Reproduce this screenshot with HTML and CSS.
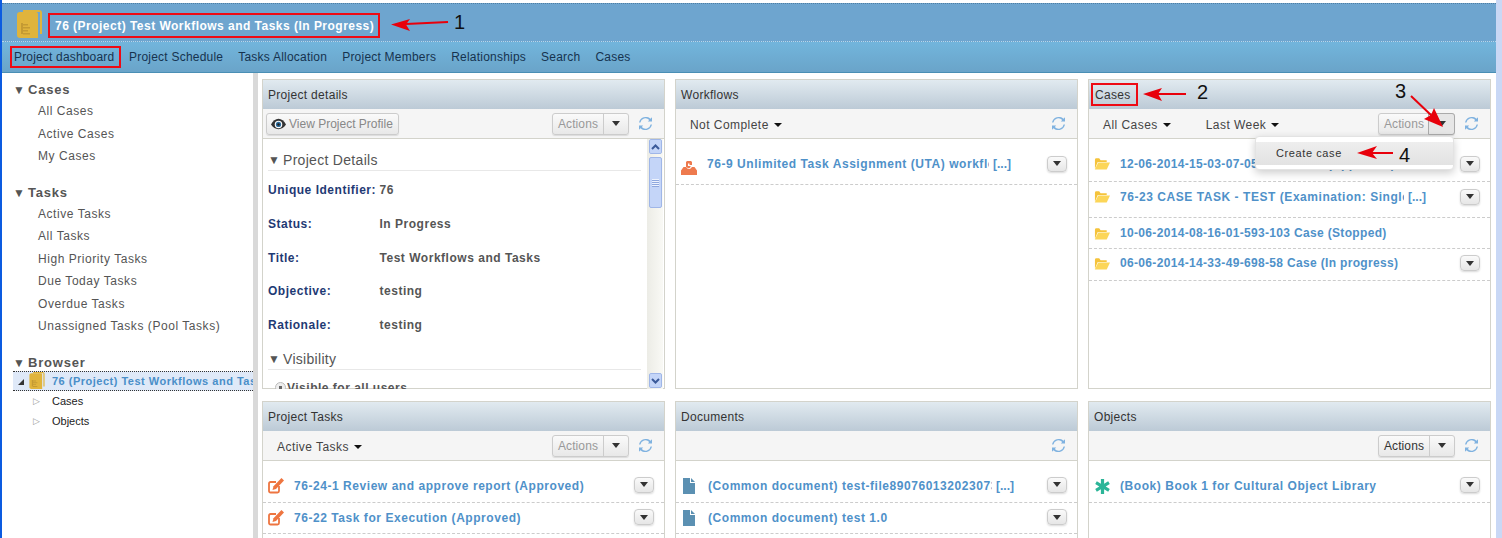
FILE: index.html
```html
<!DOCTYPE html>
<html>
<head lang="en">
    <meta charset="UTF-8">
    <title>76 (Project) Test Workflows and Tasks</title>
    <link rel="stylesheet" href="styles.css">
</head>
<body>
<svg class="defs" width="0" height="0">
    <symbol id="i-project" viewBox="0 0 25 28">
        <path d="M6 0h16a3 3 0 0 1 3 3v21h-2V2H6z" fill="#e0b43c"/>
        <path d="M3 2h16a2 2 0 0 1 2 2v24H3a3 3 0 0 1-3-3V5a3 3 0 0 1 3-3z" fill="#e0b43c"/>
        <path d="M4 13h2v11H4zM6 14h5v1.500H6zM6 17h7v1.500H6zM6 20h5v1.500H6zM6 23h7v1.500H6z" fill="#c49a33"/>
    </symbol>
    <symbol id="i-refresh" viewBox="0 0 14 14">
        <path d="M1.500 6A5.500 5.500 0 0 1 11 3.200L9.500 4.800H14V.3l-1.600 1.600A7.500 7.500 0 0 0 0 6z" fill="#7fb2e0"/>
        <path d="M12.500 8A5.500 5.500 0 0 1 3 10.800l1.500-1.600H0v4.500l1.600-1.600A7.500 7.500 0 0 0 14 8z" fill="#7fb2e0"/>
    </symbol>
    <symbol id="i-folder" viewBox="0 0 17 13">
        <path d="M1 2.500A1.500 1.500 0 0 1 2.500 1h3L7 3h6.500v2H4L1 12z" fill="#f5c33b"/>
        <path d="M4.500 5.500H17L13.500 13H.8z" fill="#fcd658"/>
    </symbol>
    <symbol id="i-edit" viewBox="0 0 16 16">
        <path d="M11 8v5a1.500 1.500 0 0 1-1.500 1.500H2.500A1.500 1.500 0 0 1 1 13V5.500A1.500 1.500 0 0 1 2.500 4H8" fill="none" stroke="#ee7540" stroke-width="1.800"/>
        <path d="M13.500 0l2.500 2.500L8 11 4.500 12 5.500 8.300z" fill="#ee7540"/>
    </symbol>
    <symbol id="i-doc" viewBox="0 0 12 16">
        <path d="M0 0h7v5h5v11H0zM8 0l4 4H8z" fill="#5b90b2"/>
    </symbol>
    <symbol id="i-flow" viewBox="0 0 16 14">
        <path d="M2.500 6H5l2 2h2l2-2h2.500L16 9.500V14H0V9.500z" fill="#ee7a4e"/>
        <path d="M6 0h4l1 1v3H8.500V2.500H7V5h2.500v1L8 7.500 5 6V1z" fill="#ee7a4e"/>
    </symbol>
    <symbol id="i-star" viewBox="0 0 14 14">
        <path d="M5.500 0h3v4.400L12.300 2l1.500 2.700L10 7l3.800 2.300-1.500 2.700-3.800-2.400V14h-3V9.600L1.700 12 .2 9.300 4 7 .2 4.700 1.700 2l3.800 2.400z" fill="#2cb598"/>
    </symbol>
    <symbol id="i-eye" viewBox="0 0 16 12">
        <path d="M0 6.500C2 3 5 .5 8 .5s6 2.500 8 6c-2 3-5 5-8 5s-6-2-8-5z" fill="#333"/>
        <circle cx="8" cy="6.500" r="4" fill="#fff"/>
        <circle cx="8" cy="6.500" r="2.800" fill="#2f6f9f"/>
        <circle cx="8" cy="6.500" r="1.300" fill="#222"/>
    </symbol>
</svg>

<div class="page">
    <div class="head">
        <svg class="head-icon"><use href="#i-project"/></svg>
        <h1 class="head-title">76 (Project) Test Workflows and Tasks (In Progress)</h1>
    </div>
    <div class="nav">
        <a class="nav-item nav-current">Project dashboard</a>
        <a class="nav-item">Project Schedule</a>
        <a class="nav-item">Tasks Allocation</a>
        <a class="nav-item">Project Members</a>
        <a class="nav-item">Relationships</a>
        <a class="nav-item">Search</a>
        <a class="nav-item">Cases</a>
    </div>

    <div class="main">
        <div class="side">
            <div class="side-group">
                <h3 class="side-title"><span class="tri">▼</span>Cases</h3>
                <a class="side-link">All Cases</a>
                <a class="side-link">Active Cases</a>
                <a class="side-link">My Cases</a>
            </div>
            <div class="side-group">
                <h3 class="side-title"><span class="tri">▼</span>Tasks</h3>
                <a class="side-link">Active Tasks</a>
                <a class="side-link">All Tasks</a>
                <a class="side-link">High Priority Tasks</a>
                <a class="side-link">Due Today Tasks</a>
                <a class="side-link">Overdue Tasks</a>
                <a class="side-link">Unassigned Tasks (Pool Tasks)</a>
            </div>
            <div class="side-group">
                <h3 class="side-title side-title-tree"><span class="tri">▼</span>Browser</h3>
                <div class="tree-root">
                    <span class="tree-open"></span>
                    <svg class="tree-icon"><use href="#i-project"/></svg>
                    <span class="tree-root-text">76 (Project) Test Workflows and Tasks (In Progress)</span>
                </div>
                <div class="tree-item"><span class="tree-closed">▷</span>Cases</div>
                <div class="tree-item"><span class="tree-closed">▷</span>Objects</div>
            </div>
        </div>
        <div class="splitter"></div>

        <div class="panels">
            <section class="panel">
                <div class="panel-head">Project details</div>
                <div class="panel-bar">
                    <button class="btn-view"><svg class="eye"><use href="#i-eye"/></svg>View Project Profile</button>
                    <div class="bar-right">
                        <div class="actions actions-off"><span class="actions-label">Actions</span><span class="actions-caret"><i class="caret"></i></span></div>
                        <svg class="refresh"><use href="#i-refresh"/></svg>
                    </div>
                </div>
                <div class="details">
                    <div class="details-body">
                        <h4 class="sub-title"><span class="tri-sub">▼</span>Project Details</h4>
                        <div class="field field-first"><b>Unique Identifier:</b><span>76</span></div>
                        <div class="field"><b>Status:</b><span>In Progress</span></div>
                        <div class="field"><b>Title:</b><span>Test Workflows and Tasks</span></div>
                        <div class="field"><b>Objective:</b><span>testing</span></div>
                        <div class="field"><b>Rationale:</b><span>testing</span></div>
                        <h4 class="sub-title sub-title-2"><span class="tri-sub">▼</span>Visibility</h4>
                        <div class="radio-row"><i class="radio"></i><b>Visible for all users</b></div>
                    </div>
                    <div class="scroll">
                        <span class="scroll-btn"><svg width="9" height="6" viewBox="0 0 9 6"><path d="M1 5l3.500-3.500L8 5" fill="none" stroke="#3b5a9a" stroke-width="2"/></svg></span>
                        <span class="scroll-thumb"><i class="grip"></i></span>
                        <span class="scroll-track"></span>
                        <span class="scroll-btn"><svg width="9" height="6" viewBox="0 0 9 6"><path d="M1 1l3.500 3.500L8 1" fill="none" stroke="#3b5a9a" stroke-width="2"/></svg></span>
                    </div>
                </div>
            </section>

            <section class="panel">
                <div class="panel-head">Workflows</div>
                <div class="panel-bar">
                    <a class="filter">Not Complete<i class="filter-caret"></i></a>
                    <div class="bar-right">
                        <svg class="refresh"><use href="#i-refresh"/></svg>
                    </div>
                </div>
                <div class="rows rows-top">
                    <div class="row row-wf">
                        <svg class="row-icon row-flow"><use href="#i-flow"/></svg>
                        <a class="row-text row-cut row-cut-wf">76-9 Unlimited Task Assignment (UTA) workflow</a><span class="row-more">[...]</span>
                        <span class="row-menu"><i class="caret"></i></span>
                    </div>
                </div>
            </section>

            <section class="panel">
                <div class="panel-head"><span class="mark-cases">Cases</span></div>
                <div class="panel-bar">
                    <a class="filter">All Cases<i class="filter-caret"></i></a>
                    <a class="filter filter-2">Last Week<i class="filter-caret"></i></a>
                    <div class="bar-right">
                        <div class="actions actions-off actions-open"><span class="actions-label">Actions</span><span class="actions-caret"><i class="caret"></i></span></div>
                        <svg class="refresh"><use href="#i-refresh"/></svg>
                    </div>
                </div>
                <div class="rows rows-top">
                    <div class="row row-c1">
                        <svg class="row-icon row-folder"><use href="#i-folder"/></svg>
                        <a class="row-text row-text-date">12-06-2014-15-03-07-059-109 Case (Approved)</a>
                        <span class="row-menu"><i class="caret"></i></span>
                    </div>
                    <div class="row row-c2">
                        <svg class="row-icon row-folder"><use href="#i-folder"/></svg>
                        <a class="row-text row-cut row-cut-c">76-23 CASE TASK - TEST (Examination: Single</a><span class="row-more">[...]</span>
                        <span class="row-menu"><i class="caret"></i></span>
                    </div>
                    <div class="row row-c3">
                        <svg class="row-icon row-folder"><use href="#i-folder"/></svg>
                        <a class="row-text row-text-date">10-06-2014-08-16-01-593-103 Case (Stopped)</a>
                    </div>
                    <div class="row row-c4">
                        <svg class="row-icon row-folder"><use href="#i-folder"/></svg>
                        <a class="row-text row-text-date">06-06-2014-14-33-49-698-58 Case (In progress)</a>
                        <span class="row-menu"><i class="caret"></i></span>
                    </div>
                </div>
                <div class="menu"><div class="menu-item">Create case</div></div>
            </section>

            <section class="panel">
                <div class="panel-head">Project Tasks</div>
                <div class="panel-bar">
                    <a class="filter">Active Tasks<i class="filter-caret"></i></a>
                    <div class="bar-right">
                        <div class="actions actions-off"><span class="actions-label">Actions</span><span class="actions-caret"><i class="caret"></i></span></div>
                        <svg class="refresh"><use href="#i-refresh"/></svg>
                    </div>
                </div>
                <div class="rows rows-top">
                    <div class="row row-b1">
                        <svg class="row-icon row-edit"><use href="#i-edit"/></svg>
                        <a class="row-text">76-24-1 Review and approve report (Approved)</a>
                        <span class="row-menu"><i class="caret"></i></span>
                    </div>
                    <div class="row row-b2">
                        <svg class="row-icon row-edit"><use href="#i-edit"/></svg>
                        <a class="row-text">76-22 Task for Execution (Approved)</a>
                        <span class="row-menu"><i class="caret"></i></span>
                    </div>
                </div>
            </section>

            <section class="panel">
                <div class="panel-head">Documents</div>
                <div class="panel-bar">
                    <div class="bar-right">
                        <svg class="refresh"><use href="#i-refresh"/></svg>
                    </div>
                </div>
                <div class="rows rows-top">
                    <div class="row row-b1">
                        <svg class="row-icon row-doc"><use href="#i-doc"/></svg>
                        <a class="row-text row-cut row-cut-d">(Common document) test-file890760132023073</a><span class="row-more">[...]</span>
                        <span class="row-menu"><i class="caret"></i></span>
                    </div>
                    <div class="row row-b2">
                        <svg class="row-icon row-doc"><use href="#i-doc"/></svg>
                        <a class="row-text">(Common document) test 1.0</a>
                        <span class="row-menu"><i class="caret"></i></span>
                    </div>
                </div>
            </section>

            <section class="panel">
                <div class="panel-head">Objects</div>
                <div class="panel-bar">
                    <div class="bar-right">
                        <div class="actions"><span class="actions-label">Actions</span><span class="actions-caret"><i class="caret"></i></span></div>
                        <svg class="refresh"><use href="#i-refresh"/></svg>
                    </div>
                </div>
                <div class="rows rows-top">
                    <div class="row row-b1">
                        <svg class="row-icon row-star"><use href="#i-star"/></svg>
                        <a class="row-text">(Book) Book 1 for Cultural Object Library</a>
                        <span class="row-menu"><i class="caret"></i></span>
                    </div>
                </div>
            </section>
        </div>
    </div>

    <!-- annotations drawn on top of the screenshot -->
    <svg class="notes" width="1502" height="538" viewBox="0 0 1502 538">
        <g stroke="#e8000b" stroke-width="2" fill="#e8000b">
            <path d="M448 22 L406 24" fill="none"/>
            <path d="M391 24.500 L410 19 L406 24.500 L410 31z" stroke="none"/>
            <path d="M1186 94 L1158 94" fill="none"/>
            <path d="M1143 94 L1162 88 L1158 94 L1162 101z" stroke="none"/>
            <path d="M1411 96 L1432 116" fill="none"/>
            <path d="M1443 127 L1424 119 L1431 115 L1434 108z" stroke="none"/>
            <path d="M1393 153 L1368 153" fill="none"/>
            <path d="M1357 153 L1377 146 L1372 153 L1377 159z" stroke="none"/>
        </g>
    </svg>
    <span class="note note-1">1</span>
    <span class="note note-2">2</span>
    <span class="note note-3">3</span>
    <span class="note note-4">4</span>
</div>
</body>
</html>
```

FILE: styles.css
```css
*{
    margin: 0px;
    padding: 0px;
    box-sizing: border-box;
}
html,body{
    width: 1502px;
    height: 538px;
    overflow: hidden;
    background: #fff;
}
body{
    font-family: "Liberation Sans", Arial, sans-serif;
    font-size: 12px;
    color: #333;
}
.defs{
    position: absolute;
}
.page{
    position: relative;
    width: 1502px;
    height: 538px;
    padding-top: 3px;
    border-left: 2px solid #0c5be0;
    border-right: 6px solid #c9d8f5;
    overflow: hidden;
}

/* header */
.head{
    display: flex;
    align-items: center;
    height: 39px;
    padding: 6px 0px 0px 15px;
    background: #6ea5cf;
    border-top: 1px dotted #4f7ea3;
    border-bottom: 1px dotted #b7d6ea;
}
.head-icon{
    width: 25px;
    height: 28px;
    margin: -4px 6px 0px 0px;
}
.head-title{
    display: flex;
    align-items: center;
    width: 332px;
    height: 25px;
    padding-left: 5px;
    border: 2px solid #ee0a14;
    color: #fff;
    font-size: 12px;
    font-weight: bold;
    letter-spacing: 0.48px;
    white-space: nowrap;
}
.nav{
    display: flex;
    align-items: center;
    height: 31px;
    padding-left: 8px;
    background: linear-gradient(#72b5dc, #6aa4c9);
    border-bottom: 1px solid #4a8fb5;
}
.nav-item{
    margin-right: 15px;
    color: #16334f;
    letter-spacing: 0.22px;
    white-space: nowrap;
}
.nav-current{
    width: 111px;
    height: 22px;
    line-height: 19px;
    padding: 0px 0px 0px 2px;
    margin-right: 8px;
    border: 2px solid #ee0a14;
    letter-spacing: 0.17px;
}

.main{
    display: flex;
    height: 465px;
}

/* left column */
.side{
    width: 251px;
    padding: 8px 0px 0px 11px;
    overflow: hidden;
}
.side-group{
    margin-bottom: 13px;
}
.side-title{
    height: 22px;
    line-height: 17px;
    font-size: 13px;
    color: #555;
    letter-spacing: 0.8px;
}
.side-title-tree{
    height: 19px;
}
.tri{
    display: inline-block;
    width: 15px;
    font-size: 12px;
    letter-spacing: 0px;
}
.side-link{
    display: block;
    height: 22.500px;
    line-height: 16px;
    padding-left: 25px;
    color: #555;
    letter-spacing: 0.55px;
}
.tree-root{
    display: flex;
    align-items: center;
    height: 20px;
    margin-top: -2px;
    background: #dfe9f8;
    border-top: 1px dotted #333;
    border-bottom: 1px dotted #333;
    white-space: nowrap;
    overflow: hidden;
}
.tree-open{
    width: 0px;
    height: 0px;
    margin: 2px 5px 0px 5px;
    border-left: 6px solid transparent;
    border-bottom: 6px solid #333;
}
.tree-icon{
    width: 16px;
    height: 17px;
    margin-right: 7px;
    flex: none;
}
.tree-root-text{
    color: #4a8fc9;
    font-size: 11px;
    font-weight: bold;
    letter-spacing: 0.5px;
}
.tree-item{
    display: flex;
    align-items: center;
    height: 20px;
    padding-left: 20px;
    font-size: 11px;
    color: #222;
}
.tree-closed{
    width: 19px;
    font-family: "DejaVu Sans", sans-serif;
    font-size: 9px;
    color: #999;
}
.splitter{
    width: 5px;
    background: #d9d9d9;
}

/* panels */
.panels{
    display: grid;
    grid-template-columns: 403px 403px 403px;
    grid-template-rows: 310px 200px;
    column-gap: 10px;
    row-gap: 12px;
    padding: 6px 0px 0px 4px;
}
.panel{
    position: relative;
    border: 1px solid #d3d3cb;
    background: #fff;
}
.panel-head{
    height: 29px;
    line-height: 31px;
    padding-left: 5px;
    background: linear-gradient(#e1eaf0, #bccad6);
    color: #333;
    letter-spacing: 0.3px;
}
.panel-bar{
    display: flex;
    align-items: center;
    height: 30px;
    padding-left: 14px;
    background: #f5f5f5;
    border-bottom: 1px solid #d3d3cb;
}
.bar-right{
    display: flex;
    align-items: center;
    margin-left: auto;
    padding-right: 12px;
}
.filter{
    padding-top: 2px;
    color: #444;
    letter-spacing: 0.45px;
}
.filter-2{
    margin-left: 35px;
}
.filter-caret{
    display: inline-block;
    margin-left: 5px;
    vertical-align: 2px;
    border-left: 4px solid transparent;
    border-right: 4px solid transparent;
    border-top: 4px solid #111;
}
.refresh{
    width: 13px;
    height: 13px;
}
.actions{
    display: flex;
    height: 22px;
    margin-right: 10px;
    border: 1px solid #ccc;
    border-radius: 3px;
    background: linear-gradient(#fafafa, #e8e8e8);
    box-shadow: 0px 1px 1px rgba(0,0,0,0.1);
    color: #333;
}
.actions-off .actions-label{
    color: #999;
}
.actions-label{
    width: 50px;
    line-height: 20px;
    text-align: center;
    letter-spacing: 0.1px;
}
.actions-caret{
    display: flex;
    align-items: center;
    justify-content: center;
    width: 25px;
    border-left: 1px solid #ccc;
}
.actions-open .actions-caret{
    border: 1px solid #aaa;
    margin: -1px;
    width: 27px;
    border-radius: 0px 3px 3px 0px;
    background: #e6e6e6;
}
.caret{
    width: 0px;
    height: 0px;
    border-left: 4px solid transparent;
    border-right: 4px solid transparent;
    border-top: 5px solid #333;
}
.btn-view{
    display: flex;
    align-items: center;
    width: 133px;
    height: 22px;
    margin-left: -11px;
    padding: 0px 4px;
    border: 1px solid #ccc;
    border-radius: 3px;
    background: linear-gradient(#fafafa, #e8e8e8);
    box-shadow: 0px 1px 1px rgba(0,0,0,0.1);
    color: #888;
    font: inherit;
    white-space: nowrap;
}
.eye{
    width: 15px;
    height: 12px;
    margin-right: 3px;
    flex: none;
}

/* project details */
.details{
    display: flex;
    height: 250px;
    overflow: hidden;
}
.details-body{
    flex: 1;
    padding: 11px 6px 0px 5px;
    overflow: hidden;
}
.sub-title{
    height: 21px;
    padding-top: 2px;
    font-size: 14px;
    font-weight: normal;
    color: #555;
    letter-spacing: 0.3px;
    border-bottom: 1px solid #e8e8e8;
}
.sub-title-2{
    margin-top: 6px;
}
.tri-sub{
    display: inline-block;
    width: 15px;
    font-size: 12px;
    vertical-align: 1px;
    letter-spacing: 0px;
}
.field{
    display: flex;
    height: 33.700px;
    line-height: 16px;
    padding-top: 8px;
    color: #555;
    font-weight: bold;
    letter-spacing: 0.52px;
}
.field-first{
    height: 34px;
    margin-top: 3px;
}
.field b{
    width: 111.500px;
    flex: none;
    color: #1f3a74;
    white-space: nowrap;
}
.radio-row{
    display: flex;
    align-items: center;
    margin: 11px 0px 0px 7px;
    color: #555;
    white-space: nowrap;
    letter-spacing: 0.5px;
}
.radio{
    width: 11px;
    height: 11px;
    margin-right: 1px;
    border: 1px solid #bbb;
    border-radius: 50%;
    background: radial-gradient(#666 25%, #eee 30%);
}
.scroll{
    display: flex;
    flex-direction: column;
    width: 16px;
    margin-right: 1px;
    padding: 0px 1px 1px 2px;
    background: linear-gradient(90deg, #ecece6, #f9f9f5);
}
.scroll-btn{
    display: flex;
    align-items: center;
    justify-content: center;
    height: 15px;
    background: #c4d5f8;
    border: 1px solid #e6ecfb;
    outline: 1px solid #9fb6e8;
    outline-offset: -1px;
    border-radius: 2px;
}
.scroll-thumb{
    display: flex;
    align-items: center;
    justify-content: center;
    height: 51px;
    margin-top: 3px;
    background: #c4d5f8;
    border: 1px solid #9fb6e8;
    border-radius: 2px;
}
.grip{
    width: 7px;
    height: 8px;
    background: repeating-linear-gradient(#eef3fe 0px, #eef3fe 1px, #8fa8de 1px, #8fa8de 2px);
}
.scroll-track{
    flex: 1;
}

/* rows */
.row{
    display: flex;
    align-items: center;
    height: 31px;
    padding: 0px 10px 0px 5px;
    border-bottom: 1px dashed #ccc;
    white-space: nowrap;
}
.row-wf{
    height: 46px;
    padding-top: 4px;
}
.row-c1{
    height: 43px;
    padding-top: 7px;
}
.row-c2{
    height: 36px;
    padding-bottom: 6px;
}
.row-c3{
    height: 31px;
}
.row-c4{
    height: 32px;
    padding-bottom: 3px;
}
.row-b1{
    height: 42px;
    padding-top: 9px;
}
.row-b1 .row-menu{
    margin-top: -3px;
}
.row-b2{
    height: 31px;
}
.row-b2 .row-menu{
    margin-top: -2px;
}
.row-icon{
    width: 16px;
    height: 16px;
    margin-right: 10px;
    flex: none;
}
.row-flow{
    height: 14px;
    margin-top: 8px;
}
.row-folder{
    height: 13px;
}
.row-doc{
    width: 12px;
    height: 16px;
    margin: 0px 13px 0px 2px;
}
.row-star{
    width: 15px;
    height: 15px;
    margin: 0px 10px 0px 1px;
}
.row-text{
    color: #4f91c9;
    font-weight: bold;
    letter-spacing: 0.55px;
}
.row-text-date{
    letter-spacing: 0.33px;
}
.row-cut{
    display: block;
    overflow: hidden;
}
.row-cut-wf{
    width: 282px;
}
.row-cut-c{
    width: 284px;
}
.row-cut-d{
    width: 284px;
}
.row-more{
    margin-left: 4px;
    color: #4f91c9;
    font-weight: bold;
}
.row-menu{
    display: flex;
    align-items: center;
    justify-content: center;
    width: 20px;
    height: 16px;
    margin-left: auto;
    border: 1px solid #ccc;
    border-radius: 4px;
    background: linear-gradient(#fafafa, #e6e6e6);
    box-shadow: 0px 1px 2px rgba(0,0,0,0.15);
}
.row-menu .caret{
    border-left-width: 4.500px;
    border-right-width: 4.500px;
}

/* open dropdown */
.menu{
    position: absolute;
    left: 166px;
    top: 56px;
    width: 199px;
    height: 34px;
    padding: 5px 0px;
    background: #fff;
    border: 1px solid #e3e3e3;
    border-radius: 4px;
    box-shadow: 0px 3px 8px rgba(0,0,0,0.2);
    z-index: 2;
}
.menu-item{
    height: 23px;
    line-height: 22px;
    padding-left: 20px;
    background: linear-gradient(#eee, #e2e2e2);
    color: #333;
    font-size: 11px;
    letter-spacing: 0.6px;
}
.mark-cases{
    display: inline-block;
    width: 47px;
    height: 23px;
    line-height: 20px;
    margin: 3px 0px 0px -3px;
    padding-left: 2px;
    border: 2px solid #ee0a14;
    vertical-align: top;
}

/* annotations */
.notes{
    position: absolute;
    left: -2px;
    top: 0px;
    z-index: 5;
    pointer-events: none;
}
.note{
    position: absolute;
    z-index: 6;
    color: #111;
    font-size: 20px;
}
.note-1{
    left: 452px;
    top: 11px;
}
.note-2{
    left: 1195px;
    top: 81px;
}
.note-3{
    left: 1393px;
    top: 80px;
}
.note-4{
    left: 1397px;
    top: 144px;
}
```
